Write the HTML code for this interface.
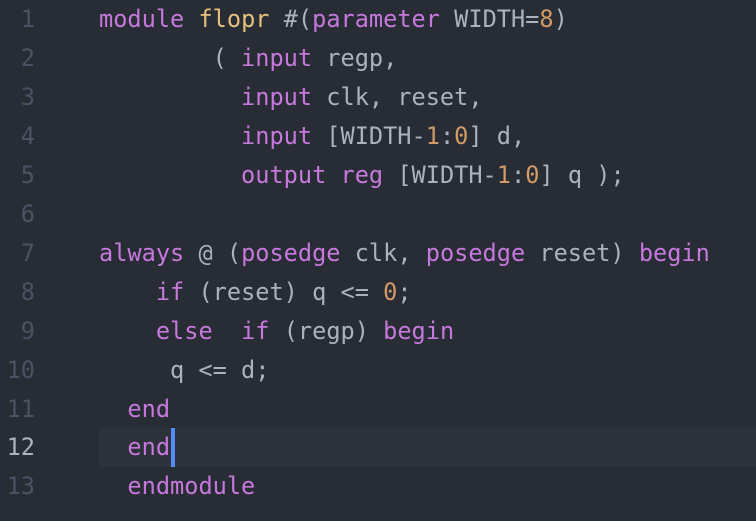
<!DOCTYPE html>
<html><head><style>
html,body{margin:0;padding:0;background:#282c34;width:756px;height:521px;overflow:hidden}
.l{position:absolute;left:0;width:756px;height:39px;line-height:39px;font-family:"DejaVu Sans Mono","Liberation Mono",monospace;font-size:23.6px;white-space:pre;color:#abb2bf}
.n{position:absolute;right:721px;color:#4b5263;text-align:right}
.c{position:absolute;left:99px}
.k{color:#c678dd}.y{color:#e5c07b}.d{color:#d19a66}
.act{position:absolute;left:99px;top:428px;width:657px;height:39px;background:#2c313a}
.cur{position:absolute;left:171px;top:428px;width:4px;height:39px;background:#528bff}
</style></head><body>
<div class="act"></div>
<div class="l" style="top:0"><span class="n">1</span><span class="c"><span class="k">module</span> <span class="y">flopr</span> #(<span class="k">parameter</span> WIDTH=<span class="d">8</span>)</span></div>
<div class="l" style="top:39px"><span class="n">2</span><span class="c">        ( <span class="k">input</span> regp,</span></div>
<div class="l" style="top:78px"><span class="n">3</span><span class="c">          <span class="k">input</span> clk, reset,</span></div>
<div class="l" style="top:117px"><span class="n">4</span><span class="c">          <span class="k">input</span> [WIDTH-<span class="d">1</span>:<span class="d">0</span>] d,</span></div>
<div class="l" style="top:156px"><span class="n">5</span><span class="c">          <span class="k">output</span> <span class="k">reg</span> [WIDTH-<span class="d">1</span>:<span class="d">0</span>] q );</span></div>
<div class="l" style="top:195px"><span class="n">6</span></div>
<div class="l" style="top:234px"><span class="n">7</span><span class="c"><span class="k">always</span> @ (<span class="k">posedge</span> clk, <span class="k">posedge</span> reset) <span class="k">begin</span></span></div>
<div class="l" style="top:273px"><span class="n">8</span><span class="c">    <span class="k">if</span> (reset) q &lt;= <span class="d">0</span>;</span></div>
<div class="l" style="top:312px"><span class="n">9</span><span class="c">    <span class="k">else</span>  <span class="k">if</span> (regp) <span class="k">begin</span></span></div>
<div class="l" style="top:351px"><span class="n">10</span><span class="c">     q &lt;= d;</span></div>
<div class="l" style="top:390px"><span class="n">11</span><span class="c">  <span class="k">end</span></span></div>
<div class="l" style="top:428px"><span class="n" style="color:#abb2bf">12</span><span class="c">  <span class="k">end</span></span></div>
<div class="l" style="top:467px"><span class="n">13</span><span class="c">  <span class="k">endmodule</span></span></div>
<div class="cur"></div>
</body></html>
